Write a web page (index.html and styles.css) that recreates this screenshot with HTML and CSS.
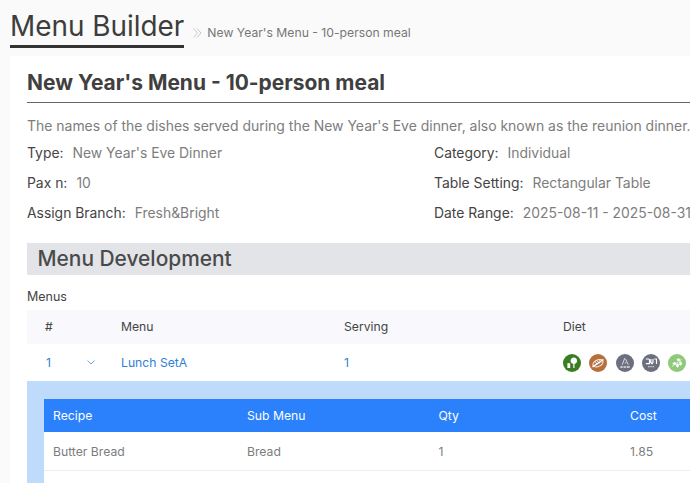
FILE: index.html
```html
<!DOCTYPE html>
<html lang="en">

<head>
  <meta charset="UTF-8" />
  <title>Menu Builder</title>
  <link rel="stylesheet" href="styles.css">
</head>

<body>
  <header class="page-head">
    <h1 class="page-title">Menu Builder</h1>
    <svg class="crumb-sep" width="9" height="10" viewBox="0 0 9 10" fill="none" stroke="#c9c9c9" stroke-width="1">
      <path d="M0.5 0.5l4 4.5-4 4.5M4 0.5l4 4.5-4 4.5" />
    </svg>
    <span class="crumb">New Year's Menu - 10-person meal</span>
  </header>

  <main class="card">
    <h2 class="menu-name">New Year's Menu - 10-person meal</h2>
    <p class="desc">The names of the dishes served during the New Year's Eve dinner, also known as the reunion dinner.</p>

    <div class="info">
      <div class="info-item"><span class="info-label">Type:</span>New Year's Eve Dinner</div>
      <div class="info-item"><span class="info-label">Category:</span>Individual</div>
      <div class="info-item"><span class="info-label">Pax n:</span>10</div>
      <div class="info-item"><span class="info-label">Table Setting:</span>Rectangular Table</div>
      <div class="info-item"><span class="info-label">Assign Branch:</span>Fresh&amp;Bright</div>
      <div class="info-item"><span class="info-label">Date Range:</span>2025-08-11 - 2025-08-31</div>
    </div>

    <h3 class="section-title">Menu Development</h3>
    <div class="table-label">Menus</div>

    <div class="row row-head menus-cols">
      <span class="cell-num">#</span>
      <span>Menu</span>
      <span>Serving</span>
      <span>Diet</span>
    </div>
    <div class="row row-menu menus-cols">
      <span class="cell-num">1</span>
      <svg class="chevron" width="8" height="5" viewBox="0 0 8 5" fill="none" stroke="#7aa5d8" stroke-width="1">
        <path d="M0.5 0.5l3.5 3.5 3.5-3.5" />
      </svg>
      <span class="menu-link">Lunch SetA</span>
      <span>1</span>
      <div class="diet-icons">
        <!-- tree and small block -->
        <span class="diet green-dark">
          <svg width="18" height="18" viewBox="0 0 18 18" fill="#fff">
            <path d="M10.8 3.5c2 0 3.300 1.500 3.300 3.200 0 1.700-1.100 2.800-2.600 3.300V14h-1.200v-4c-1.400-.4-2.700-1.500-2.700-3.300 0-1.700 1.400-3.200 3.200-3.200z" />
            <rect x="4.400" y="9.200" width="2.800" height="4.800" />
          </svg>
        </span>
        <!-- crossed out bread -->
        <span class="diet brown">
          <svg width="18" height="18" viewBox="0 0 18 18" fill="none" stroke="#fff" stroke-width="1">
            <ellipse cx="9" cy="9.200" rx="5.400" ry="3.200" transform="rotate(-25 9 9.200)" />
            <path d="M6.300 7.800l2 2.800M8.300 6.800l2 2.800M10.400 6l1.900 2.600" stroke-width="0.900" />
            <path d="M3.500 12.800L14.500 5.500" stroke-width="1.400" />
          </svg>
        </span>
        <!-- wheat sprig with a caption line -->
        <span class="diet grey">
          <svg width="18" height="18" viewBox="0 0 18 18" fill="none" stroke="#e3e4e8" stroke-width="0.900">
            <path d="M6.200 10.800L8.800 4M9.500 5l1.200 2.200-1.600 2.300M11 8l1.400 2.800" />
            <path d="M4.300 13h2.400M7.500 13h2.400M10.700 13h3" stroke-width="1.500" />
          </svg>
        </span>
        <!-- kosher mark -->
        <span class="diet grey">
          <svg width="18" height="18" viewBox="0 0 18 18" fill="none" stroke="#fff" stroke-width="1.200">
            <path d="M3.800 5h2.700c.7 0 1 .5 1 1.200v3.500H3.800M8.800 5v3.300l1.200 1.400 1-1.400V5M12.300 5h2.200v5" />
            <path d="M6 12.700h1.500M8.300 12.700h1.500M10.600 12.700h1.500" stroke="#d0d1d6" stroke-width="1.300" />
          </svg>
        </span>
        <!-- sesame branch -->
        <span class="diet green-light">
          <svg width="18" height="18" viewBox="0 0 18 18" fill="#fff" stroke="#fff" stroke-width="0.700">
            <path d="M4 12.500L13.500 5.500" fill="none" />
            <ellipse cx="6.500" cy="9.500" rx="1.500" ry="1" />
            <ellipse cx="10.500" cy="5.800" rx="1.500" ry="1" />
            <ellipse cx="9.500" cy="11.500" rx="1.100" ry="1.700" />
            <ellipse cx="12.500" cy="9.500" rx="1.100" ry="1.700" />
          </svg>
        </span>
      </div>
    </div>

    <div class="sub-panel">
      <div class="sub-table">
        <div class="sub-row sub-head recipe-cols">
          <span>Recipe</span>
          <span>Sub Menu</span>
          <span>Qty</span>
          <span>Cost</span>
        </div>
        <div class="sub-row recipe-cols">
          <span>Butter Bread</span>
          <span>Bread</span>
          <span>1</span>
          <span>1.85</span>
        </div>
      </div>
    </div>
  </main>
</body>

</html>
```

FILE: styles.css
```css
* {
  margin: 0;
  padding: 0;
  box-sizing: border-box;
}

html,
body {
  height: 483px;
  overflow: hidden;
}

body {
  width: 690px;
  background-color: #fafafa;
  font-family: Inter, sans-serif;
  color: #7d7d7d;
  font-size: 13.9px;
}

.page-head {
  display: flex;
  align-items: flex-start;
  height: 56px;
  padding-left: 10px;
}

.page-title {
  height: 40px;
  margin-top: 8px;
  border-bottom: 3px solid #333;
  color: #3d3d3d;
  font-size: 27.9px;
  line-height: 37px;
  font-weight: 400;
  white-space: nowrap;
}

.crumb-sep {
  margin: 28px 5px 0 9px;
}

.crumb {
  margin-top: 25px;
  font-size: 12.2px;
  line-height: 15px;
  color: #777;
  white-space: nowrap;
}

.card {
  width: 690px;
  height: 427px;
  margin-left: 10px;
  padding: 14px 0 0 17px;
  background-color: #fff;
}

.menu-name {
  width: 670px;
  height: 33px;
  border-bottom: 1px solid #666;
  color: #404040;
  font-size: 20.95px;
  line-height: 26px;
  font-weight: 700;
  white-space: nowrap;
}

.desc {
  margin-top: 14px;
  font-size: 13.96px;
  line-height: 18px;
  white-space: nowrap;
}

.info {
  display: grid;
  grid-template-columns: 407px 1fr;
  grid-auto-rows: 30px;
  width: 670px;
  margin-top: 6px;
  line-height: 24px;
}

.info-item {
  white-space: nowrap;
}

.info-label {
  margin-right: 9px;
  color: #444;
}

.section-title {
  width: 670px;
  height: 32px;
  margin-top: 12px;
  padding-left: 10.5px;
  background-color: #e3e4e8;
  color: #4a4a4a;
  font-size: 20.9px;
  line-height: 31px;
  font-weight: 500;
}

.table-label {
  margin-top: 14px;
  font-size: 12.5px;
  line-height: 15px;
  color: #444;
}

.row {
  display: grid;
  align-items: center;
  width: 670px;
  font-size: 12.2px;
}

.menus-cols {
  grid-template-columns: 76px 18px 223px 219px 1fr;
}

.row-head {
  height: 34px;
  margin-top: 6px;
  padding-bottom: 1px;
  background-color: #f8f8fd;
  color: #444;
}

.row-head span:nth-child(2) {
  grid-column: 3;
}

.cell-num {
  padding-left: 18px;
}

.row-menu {
  height: 37px;
  color: #2f7fd6;
}

.row-menu .cell-num {
  padding-left: 19px;
}

.chevron {
  margin-left: -16px;
}

.diet-icons {
  display: flex;
  gap: 8.25px;
}

.diet {
  flex: none;
  width: 18px;
  height: 18px;
  border-radius: 50%;
}

.diet svg {
  display: block;
}

.green-dark {
  background-color: #3b7d23;
}

.brown {
  background-color: #b5703c;
}

.grey {
  background-color: #6c6f7d;
}

.green-light {
  background-color: #8fc97a;
}

.sub-panel {
  width: 670px;
  height: 110px;
  padding: 18px 0 0 17px;
  background-color: #bfdbfb;
}

.sub-table {
  height: 100px;
  background-color: #fff;
}

.sub-row {
  display: grid;
  align-items: center;
  height: 39px;
  padding-left: 9px;
  border-bottom: 1px solid #eee;
  font-size: 12.2px;
}

.recipe-cols {
  grid-template-columns: 194px 191.5px 191.5px 1fr;
}

.sub-head {
  height: 33px;
  border-bottom: none;
  background-color: #2a81fb;
  color: #fff;
}
```
